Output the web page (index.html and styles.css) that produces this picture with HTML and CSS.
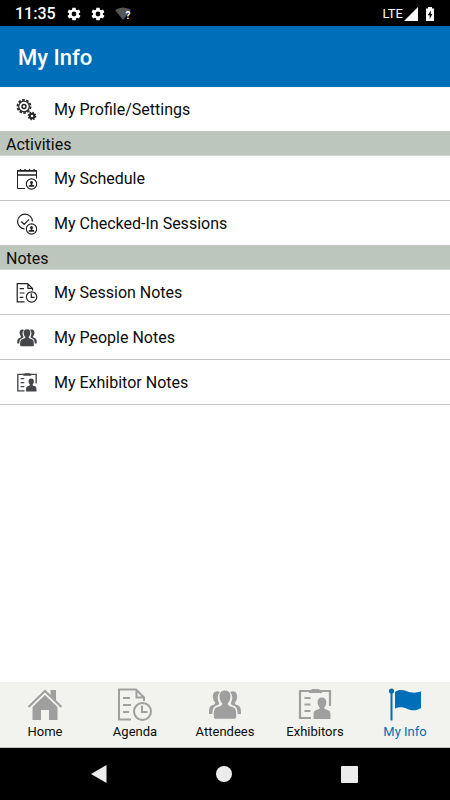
FILE: index.html
```html
<!DOCTYPE html>
<html lang="en">
<head>
<meta charset="utf-8">
<meta name="viewport" content="width=device-width, initial-scale=1">
<title>My Info</title>
<link rel="stylesheet" href="styles.css">
</head>
<body>
<svg class="defs" aria-hidden="true">
  <symbol id="gear" viewBox="0 0 24 24"><path fill="currentColor" fill-rule="evenodd" d="M19.4 13a7.800 7.800 0 0 0 0-2l2.300-1.800-2.200-3.800-2.800 1.100-1.800-1L14.500 2.500h-5L9.100 5.500l-1.800 1-2.800-1.100-2.200 3.800L4.600 11a7.800 7.800 0 0 0 0 2l-2.300 1.800 2.200 3.800 2.800-1.100 1.800 1 .4 3h5l.4-3 1.800-1 2.800 1.100 2.200-3.800zM12 15.600a3.600 3.600 0 1 1 0-7.200 3.600 3.600 0 0 1 0 7.200z"/></symbol>
  <symbol id="doc" viewBox="0 0 36 36"><g fill="none" stroke="currentColor" stroke-width="2"><path d="M14 32.500H2V2.500h17l8 8V14M19.500 2.500v8H27M6 11h7M6 18h8M6 25h6"/><circle cx="25.500" cy="24.500" r="8.500"/><path d="M25 18.500v6.500h5.500"/></g></symbol>
  <symbol id="people" viewBox="0 0 36 36"><g fill="currentColor"><path d="M13 5C8.500 2.500 5 6 6 11c.3 2 1.300 3.500 2.200 4.500-.2 1.500-1 2-2.500 2.600C2.500 19.500 2 21 2 27h3.400c.2-5 .8-7 3.800-8.200 2-.8 3-1.300 3-2.800C10.500 12.700 9.700 8.500 13 5zM23 5c4.500-2.500 8 1 7 6-.3 2-1.300 3.500-2.200 4.500.2 1.500 1 2 2.500 2.600C33.500 19.500 34 21 34 27h-3.400c-.2-5-.8-7-3.800-8.200-2-.8-3-1.300-3-2.800C25.500 12.700 26.300 8.500 23 5z"/><path d="M18 3.500c3.600 0 5.700 2.600 5.500 6-.1 3-1.300 5.500-2.800 7 .1 2 1.300 2.400 4 3.200 4 1.200 4.500 3 4.500 9 0 2.500-.5 3-2.500 3H9.300c-2 0-2.500-.5-2.500-3 0-6 .5-7.800 4.500-9 2.700-.8 3.900-1.200 4-3.200-1.500-1.500-2.700-4-2.800-7-.2-3.400 1.900-6 5.500-6z"/></g></symbol>
  <symbol id="badge" viewBox="0 0 36 36"><path fill="none" stroke="currentColor" stroke-width="2.200" d="M14 31H3V4h30v15"/><path fill="none" stroke="currentColor" stroke-width="2" d="M7.500 11h6M7.500 17.500h6M7.500 24h6"/><path fill="currentColor" d="M12 6V3h2l1-1h7l1 1h2v3zM24.800 10.500c3 0 4.700 2.100 4.500 5-.1 2.400-1 4-2.200 5.100.1 1.400.8 1.700 2.700 2.200 3 .8 3.700 2 3.700 5.500V32h-17v-3.700c0-3.500.7-4.700 3.700-5.500 1.900-.5 2.500-.8 2.600-2.200-1.200-1.100-2.100-2.700-2.200-5.100-.2-2.900 1.300-5 4.200-5z"/></symbol>
  <symbol id="home" viewBox="0 0 36 36"><path fill="none" stroke="currentColor" stroke-width="2" d="M1.500 20 18 4l16.500 16"/><path fill="currentColor" d="M23.500 3H29v11l-5.500-5.500zM18 8l12.500 12v13H22V23h-8v10H5.500V20z"/></symbol>
  <symbol id="flag" viewBox="0 0 36 36"><g fill="currentColor"><circle cx="4.500" cy="4" r="2.600"/><path d="M3.500 5h2v28.500h-2zM8 5c4-3 8-2.300 12-.8 5 2 9 1.800 14 .3V21c-5 3.200-9 2.800-14 .8-5-1.800-8-2-12 0z"/></g></symbol>
  <symbol id="gears" viewBox="0 0 22 22"><g fill="none" stroke="currentColor"><circle cx="8" cy="7.500" r="6.600" stroke-width="1.700" stroke-dasharray="2.600 1.550"/><circle cx="8" cy="7.500" r="5.300" stroke-width="1.200"/><circle cx="8" cy="7.500" r="2" stroke-width="1.400"/><circle cx="16" cy="17" r="3.700" stroke-width="1.300" stroke-dasharray="1.500 1.400"/><circle cx="16" cy="17" r="2.300" stroke-width="2"/></g></symbol>
  <symbol id="person-mark" viewBox="0 0 12 12"><circle cx="6" cy="6" r="5.200" fill="none" stroke="currentColor" stroke-width="1.200"/><circle cx="6" cy="4.500" r="1.500" fill="currentColor"/><path fill="currentColor" d="M5.500 5h1v1.500l2.300 1v1.300H3.200V7.500l2.300-1z"/></symbol>
  <symbol id="calendar" viewBox="0 0 22 22"><path fill="none" stroke="currentColor" d="M9 20.500H1.500v-18h19v8"/><path fill="none" stroke="currentColor" stroke-width="1.400" d="M1 7h20M1 3h20M4.500 1v2M9 1v2M13.500 1v2M18 1v2"/><use href="#person-mark" x="9.500" y="10" width="12" height="12"/></symbol>
  <symbol id="checkin" viewBox="0 0 22 22"><path fill="none" stroke="currentColor" stroke-width="1.200" d="M8.500 15.900A7.400 7.400 0 1 1 16.400 8.600M5.200 8.500l3 2.800 4.900-5"/><use href="#person-mark" x="9.500" y="10" width="12" height="12"/></symbol>
</svg>

<div class="screen">
  <div class="status">
    <span class="clock">11:35</span>
    <svg class="status-gear"><use href="#gear"/></svg>
    <svg class="status-gear"><use href="#gear"/></svg>
    <span class="wifi"><svg viewBox="0 0 18 14"><path fill="#555" d="M1 3Q9-2 17 3L9 13z"/></svg><b>?</b></span>
    <span class="network">LTE</span>
    <svg class="signal" viewBox="0 0 14 14"><path fill="#fff" d="M14 0v14H0z"/></svg>
    <svg class="battery" viewBox="0 0 10 14"><path fill="#fff" d="M3 0h4v1.500h2V14H1V1.500h2z"/><path fill="#000" d="M5.800 3.500 2.800 8.300h1.900V12l2.700-4.900H5.800z"/></svg>
  </div>
  <header class="title-bar"><h1>My Info</h1></header>

  <main class="content">
    <a class="row" href="#profile"><svg class="row-icon"><use href="#gears"/></svg>My Profile/Settings</a>
    <h2 class="section">Activities</h2>
    <a class="row" href="#schedule"><svg class="row-icon"><use href="#calendar"/></svg>My Schedule</a>
    <a class="row" href="#sessions"><svg class="row-icon"><use href="#checkin"/></svg>My Checked-In Sessions</a>
    <h2 class="section">Notes</h2>
    <a class="row" href="#session-notes"><svg class="row-icon"><use href="#doc"/></svg>My Session Notes</a>
    <a class="row" href="#people-notes"><svg class="row-icon solid"><use href="#people"/></svg>My People Notes</a>
    <a class="row" href="#exhibitor-notes"><svg class="row-icon solid"><use href="#badge"/></svg>My Exhibitor Notes</a>
  </main>

  <nav class="tabs" aria-label="Main">
    <a class="tab" href="#home"><svg class="tab-icon"><use href="#home"/></svg><span>Home</span></a>
    <a class="tab" href="#agenda"><svg class="tab-icon"><use href="#doc"/></svg><span>Agenda</span></a>
    <a class="tab" href="#attendees"><svg class="tab-icon"><use href="#people"/></svg><span>Attendees</span></a>
    <a class="tab" href="#exhibitors"><svg class="tab-icon"><use href="#badge"/></svg><span>Exhibitors</span></a>
    <a class="tab current" href="#info" aria-current="page"><svg class="tab-icon"><use href="#flag"/></svg><span>My Info</span></a>
  </nav>

  <div class="system-bar">
    <button type="button" aria-label="Back"><svg viewBox="0 0 18 18"><path d="M16.500 0v18L1 9z"/></svg></button>
    <button type="button" aria-label="Home screen"><svg viewBox="0 0 18 18"><circle cx="9" cy="9" r="8"/></svg></button>
    <button type="button" aria-label="Recent apps"><svg viewBox="0 0 18 18"><rect x="1" y="1" width="17" height="17" rx="1"/></svg></button>
  </div>
</div>
</body>
</html>
```
FILE: styles.css
```css
* { box-sizing: border-box; }

body {
  margin: 0;
  background: #fff;
  color: #0c0c0c;
  font-family: Roboto, "Liberation Sans", sans-serif;
}

a { color: inherit; text-decoration: none; }
svg { display: block; }

.defs { position: absolute; width: 0; height: 0; }

.screen {
  display: flex;
  flex-direction: column;
  min-height: 100vh;
}

.status {
  display: flex;
  align-items: center;
  height: 26px;
  padding: 1px 15px 0;
  background: #000;
  color: #fff;
}

.clock { margin-right: 10px; font-size: 16px; font-weight: 500; }
.status-gear { width: 16px; height: 16px; margin-right: 8px; }

.wifi { position: relative; width: 18px; }
.wifi svg { width: 18px; height: 14px; }
.wifi b { position: absolute; right: 1px; top: 3px; font-size: 10px; line-height: 12px; }

.network { margin-left: auto; font-size: 13px; }
.signal { width: 14px; height: 14px; margin: 0 7px 0 1px; }
.battery { width: 10px; height: 14px; }

.title-bar {
  display: flex;
  align-items: center;
  height: 61px;
  padding: 2px 18px 0;
  background: #006eb8;
  color: #fff;
}

.title-bar h1 { margin: 0; font-size: 22px; font-weight: 500; }

.content { flex: 1; }

.row {
  display: flex;
  align-items: center;
  gap: 16px;
  height: 45px;
  padding: 1px 16px 0;
  border-bottom: 1px solid #c4c4c4;
  font-size: 16px;
}

.row-icon { width: 22px; height: 22px; color: #222; }
.row-icon.solid { color: #444548; }

.section {
  height: 24px;
  margin: 0;
  padding: 0 6px;
  background: #bcc6bd;
  border-bottom: 1px solid #d4d6d4;
  font-size: 16px;
  font-weight: 400;
  line-height: 25px;
}

.tabs {
  display: grid;
  grid-template-columns: repeat(5, 1fr);
  height: 66px;
  padding-top: 5px;
  background: #f2f3ee;
  border-bottom: 1px solid #c4c4c4;
}

.tab {
  display: flex;
  flex-direction: column;
  align-items: center;
  font-size: 13px;
  line-height: 18px;
}

.tab-icon { width: 36px; height: 36px; color: #9f9f9f; }
.current, .current .tab-icon { color: #006eb8; }

.system-bar {
  display: flex;
  align-items: center;
  justify-content: space-between;
  height: 52px;
  padding: 0 92px 0 90px;
  background: #000;
}

.system-bar button { padding: 0; border: 0; background: none; }
.system-bar svg { width: 18px; height: 18px; fill: #ececec; }
```
